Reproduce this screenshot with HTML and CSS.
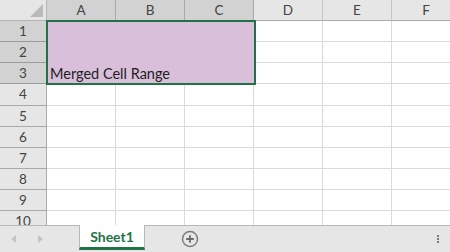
FILE: index.html
```
<!DOCTYPE html>
<html lang="en">
<head>
  <meta charset="UTF-8" />
  <title>Sheet1</title>
  <link rel="stylesheet" href="styles.css">
</head>
<body>
  <!-- Worksheet area -->
  <div class="sheet">
    <div class="grid">
      <!-- header row -->
      <div class="corner"><span class="corner-tri"></span></div>
      <div class="col-head sel">A</div>
      <div class="col-head sel">B</div>
      <div class="col-head sel">C</div>
      <div class="col-head">D</div>
      <div class="col-head">E</div>
      <div class="col-head">F</div>

      <!-- rows 1-3 hold the merged range -->
      <div class="row-head sel">1</div>
      <div class="merged">Merged Cell Range</div>
      <div class="cell"></div><div class="cell"></div><div class="cell"></div>
      <div class="row-head sel">2</div>
      <div class="cell"></div><div class="cell"></div><div class="cell"></div>
      <div class="row-head sel">3</div>
      <div class="cell"></div><div class="cell"></div><div class="cell"></div>

      <div class="row-head">4</div>
      <div class="cell"></div><div class="cell"></div><div class="cell"></div><div class="cell"></div><div class="cell"></div><div class="cell"></div>
      <div class="row-head">5</div>
      <div class="cell"></div><div class="cell"></div><div class="cell"></div><div class="cell"></div><div class="cell"></div><div class="cell"></div>
      <div class="row-head">6</div>
      <div class="cell"></div><div class="cell"></div><div class="cell"></div><div class="cell"></div><div class="cell"></div><div class="cell"></div>
      <div class="row-head">7</div>
      <div class="cell"></div><div class="cell"></div><div class="cell"></div><div class="cell"></div><div class="cell"></div><div class="cell"></div>
      <div class="row-head">8</div>
      <div class="cell"></div><div class="cell"></div><div class="cell"></div><div class="cell"></div><div class="cell"></div><div class="cell"></div>
      <div class="row-head">9</div>
      <div class="cell"></div><div class="cell"></div><div class="cell"></div><div class="cell"></div><div class="cell"></div><div class="cell"></div>
      <div class="row-head">10</div>
      <div class="cell"></div><div class="cell"></div><div class="cell"></div><div class="cell"></div><div class="cell"></div><div class="cell"></div>
    </div>
  </div>

  <!-- Sheet tab bar -->
  <div class="tabbar">
    <div class="nav">
      <span class="arrow left"></span>
      <span class="arrow right"></span>
    </div>
    <div class="tab">Sheet1</div>
    <div class="add">
      <svg width="18" height="18" viewBox="0 0 18 18">
        <circle cx="9" cy="9" r="7.5" fill="none" stroke="#7a7a7a" stroke-width="1.4"/>
        <path d="M9 5.2v7.6M5.2 9h7.6" stroke="#6a6a6a" stroke-width="1.8"/>
      </svg>
    </div>
    <div class="more">
      <span></span><span></span><span></span>
    </div>
  </div>
</body>
</html>
```
FILE: styles.css
```
/* Page reset */
body {
  margin: 0;
  width: 450px;
  height: 252px;
  overflow: hidden;
  background: #ffffff;
  font-family: Lato, "Liberation Sans", sans-serif;
}

/* Visible worksheet area, clipped above the tab bar */
.sheet {
  height: 225px;
  overflow: hidden;
}

.grid {
  display: grid;
  grid-template-columns: 47px repeat(6, 69px);
  grid-template-rows: 21px repeat(10, 21.15px);
}

/* Top-left select-all box */
.corner {
  background: #e6e6e6;
  border-right: 1px solid #b5b5b5;
  border-bottom: 1px solid #b5b5b5;
  box-sizing: border-box;
  position: relative;
}

.corner-tri {
  position: absolute;
  right: 3px;
  bottom: 3px;
  width: 0;
  height: 0;
  border-left: 13px solid transparent;
  border-bottom: 13px solid #b9b9b9;
}

/* Column headers */
.col-head {
  background: #e6e6e6;
  border-right: 1px solid #c4c4c4;
  border-bottom: 1px solid #ababab;
  box-sizing: border-box;
  display: flex;
  align-items: center;
  justify-content: center;
  font-size: 13.5px;
  color: #444;
}

.col-head.sel {
  background: #d2d2d2;
  border-right-color: #a8a8a8;
  border-bottom-color: #9a9a9a;
}

/* Row headers */
.row-head {
  background: #e6e6e6;
  border-right: 1px solid #ababab;
  border-bottom: 1px solid #a9a9a9;
  box-sizing: border-box;
  display: flex;
  align-items: center;
  justify-content: center;
  font-size: 13.5px;
  color: #444;
}

.row-head.sel {
  background: #d2d2d2;
  border-bottom-color: #9a9a9a;
}

/* Ordinary cells */
.cell {
  border-right: 1px solid #dadada;
  border-bottom: 1px solid #dadada;
  box-sizing: border-box;
}

/* Merged A1:C3 with selection outline, drawn above neighbouring gridlines */
.merged {
  grid-column: 2 / span 3;
  grid-row: 2 / span 3;
  z-index: 1;
  margin: -1px -2px -1px -1px;
  background: #d9bfd9;
  border: 2px solid #217346;
  box-sizing: border-box;
  display: flex;
  align-items: flex-end;
  padding: 0 0 1px 2px;
  font-size: 14.5px;
  color: #222;
}

/* Bottom sheet tab strip */
.tabbar {
  height: 27px;
  background: #e6e6e6;
  border-top: 1px solid #b8b8b8;
  box-sizing: border-box;
  display: flex;
  align-items: stretch;
}

.nav {
  width: 79px;
  display: flex;
  align-items: center;
  gap: 22px;
  padding-left: 11px;
  box-sizing: border-box;
}

.arrow {
  width: 0;
  height: 0;
  border-top: 4px solid transparent;
  border-bottom: 4px solid transparent;
}

.arrow.left {
  border-right: 5px solid #c4c4c4;
}

.arrow.right {
  border-left: 5px solid #c4c4c4;
}

.tab {
  width: 66px;
  margin-top: -1px;
  background: #ffffff;
  border-left: 1px solid #b8b8b8;
  border-right: 1px solid #b8b8b8;
  border-bottom: 3px solid #217346;
  box-sizing: border-box;
  display: flex;
  align-items: center;
  justify-content: center;
  font-weight: bold;
  font-size: 14px;
  color: #217346;
  height: 25px;
}

.add {
  margin-left: 36px;
  display: flex;
  align-items: center;
}

.more {
  margin-left: auto;
  margin-right: 11px;
  display: flex;
  flex-direction: column;
  justify-content: center;
  gap: 1px;
}

.more span {
  width: 2px;
  height: 2px;
  background: #7a7a7a;
}
```
